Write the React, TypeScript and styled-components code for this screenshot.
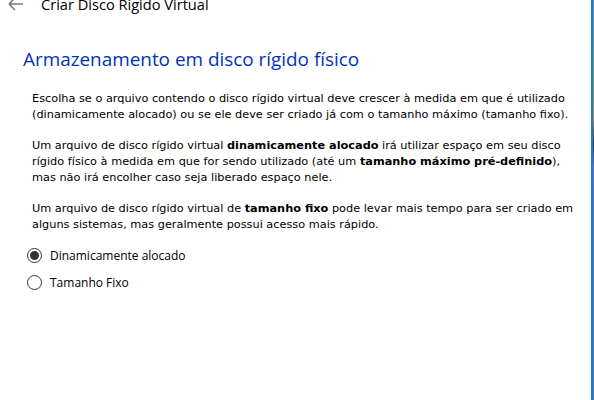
import React from "react";
import styled, { createGlobalStyle } from "styled-components";

const Global = createGlobalStyle`
  html, body { margin: 0; padding: 0; background: #fff; }
  body { width: 594px; height: 400px; overflow: hidden; }
`;

const Screen = styled.div`
  display: flex;
  width: 594px;
  height: 400px;
  overflow: hidden;
`;

const Dialog = styled.div`
  flex: 1;
  display: flex;
  flex-direction: column;
  background: #fff;
  border-right: 2px solid #1c7ad1;
`;

const DesktopStrip = styled.div`
  width: 1px;
  background: linear-gradient(180deg, #6a8fb0 0%, #7aa050 20%, #c08a40 30%, #303030 36%, #7a70b8 42%, #5d7fa8 60%, #5d7fa8 100%);
`;

const Header = styled.div`
  display: flex;
  align-items: center;
  height: 14px;
  margin-top: -3px;
  padding-left: 8px;
  gap: 17px;
`;

const Title = styled.div`
  font-family: "Segoe UI", "Open Sans", "Noto Sans", sans-serif;
  font-size: 14.6px;
  color: #000;
  line-height: 14px;
`;

const Body = styled.div`
  display: flex;
  flex-direction: column;
  padding: 35px 0 0 23px;
`;

const Heading = styled.h1`
  margin: 0;
  font-family: "Segoe UI", "Open Sans", "Noto Sans", sans-serif;
  font-weight: 400;
  font-size: 18.9px;
  line-height: 26px;
  color: #0033bc;
`;

const Text = styled.div`
  display: flex;
  flex-direction: column;
  gap: 15px;
  margin-top: 19px;
  padding-left: 9px;
`;

const Para = styled.p`
  margin: 0;
  font-family: "DejaVu Sans", Tahoma, sans-serif;
  font-size: 11.3px;
  line-height: 16px;
  color: #000;
  white-space: nowrap;
  b { font-weight: 700; }
`;

const Options = styled.div`
  display: flex;
  flex-direction: column;
  gap: 12px;
  margin-top: 15px;
  padding-left: 4px;
`;

const Option = styled.label`
  display: flex;
  align-items: center;
  gap: 8px;
  font-family: "Segoe UI", "Open Sans", "Noto Sans", sans-serif;
  font-size: 12px;
  color: #000;
  height: 15px;
`;

const Radio = styled.span<{ $checked?: boolean }>`
  box-sizing: border-box;
  width: 15px;
  height: 15px;
  border-radius: 50%;
  border: 1px solid #333;
  display: flex;
  align-items: center;
  justify-content: center;
  &::after {
    content: "";
    display: ${(p) => (p.$checked ? "block" : "none")};
    width: 9px;
    height: 9px;
    border-radius: 50%;
    background: #333;
  }
`;

const BackArrow = () => (
  <svg width="16" height="14" viewBox="0 0 16 14" fill="none">
    <path d="M1 7H15M1 7L7 1M1 7L7 13" stroke="#7a7a7a" strokeWidth="1.6" />
  </svg>
);

export default function App() {
  return (
    <Screen>
      <Global />
      <Dialog>
        <Header>
          <BackArrow />
          <Title>Criar Disco Rígido Virtual</Title>
        </Header>
        <Body>
          <Heading>Armazenamento em disco rígido físico</Heading>
          <Text>
            <Para>
              Escolha se o arquivo contendo o disco rígido virtual deve crescer à medida em que é utilizado
              <br />
              (dinamicamente alocado) ou se ele deve ser criado já com o tamanho máximo (tamanho fixo).
            </Para>
            <Para>
              Um arquivo de disco rígido virtual <b>dinamicamente alocado</b> irá utilizar espaço em seu disco
              <br />
              rígido físico à medida em que for sendo utilizado (até um <b>tamanho máximo pré-definido</b>),
              <br />
              mas não irá encolher caso seja liberado espaço nele.
            </Para>
            <Para>
              Um arquivo de disco rígido virtual de <b>tamanho fixo</b> pode levar mais tempo para ser criado em
              <br />
              alguns sistemas, mas geralmente possui acesso mais rápido.
            </Para>
          </Text>
          <Options>
            <Option>
              <Radio $checked />
              Dinamicamente alocado
            </Option>
            <Option>
              <Radio />
              Tamanho Fixo
            </Option>
          </Options>
        </Body>
      </Dialog>
      <DesktopStrip />
    </Screen>
  );
}
